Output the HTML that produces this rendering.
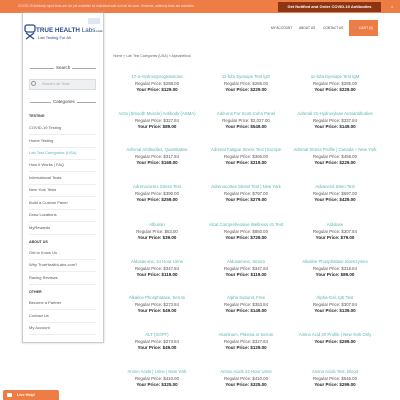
<!DOCTYPE html>
<html><head><meta charset="utf-8"><style>
*{margin:0;padding:0;box-sizing:border-box}
body{width:400px;height:400px;overflow:hidden;background:#fff;font-family:"Liberation Sans",sans-serif;position:relative;color:#555}
.a{position:absolute;white-space:nowrap}
.top{position:absolute;left:0;top:0;width:400px;height:13px;background:#ee7d45}
.side{position:absolute;left:22px;top:13px;width:82px;height:330px;border:1px solid #ccc;border-top:none;box-shadow:0 0 2px #ccc}
.si{position:absolute;left:29px;width:67px;font-size:4px;color:#555;border-bottom:1px solid #eee;height:12px;line-height:9px}
.h{position:absolute;left:29px;font-size:3.6px;font-weight:bold;color:#333}
.it{position:absolute;width:110px;text-align:center;font-size:4.3px;line-height:6.6px}
.it .t{color:#5ab4b4}
.it .r{color:#555}
.it .y{color:#222;font-weight:bold;font-size:4.5px}
</style></head><body>
<div class="top"></div>
<div class="a" style="left:18px;top:4px;font-size:3.2px;color:#fde">COVID-19 Antibody rapid tests are not yet available for individual sale but will be soon. However, antibody tests are available.</div>
<div class="a" style="left:278px;top:2px;width:103px;height:10px;background:#8e3412;color:#fff;font-size:4px;font-weight:bold;text-align:center;line-height:10px">Get Notified and Order COVID-19 Antibodies</div>
<div class="a" style="left:391px;top:4px;font-size:4px;color:#fff">×</div>
<div class="side"></div>
<svg class="a" style="left:24px;top:24px" width="12" height="16" viewBox="0 0 12 16"><rect x="1" y="1" width="10" height="7" rx="2" fill="none" stroke="#2a4a8a" stroke-width="1.3"/><path d="M2 9 L10 15 M10 9 L2 15" stroke="#2a4a8a" stroke-width="1.3"/></svg>
<div class="a" style="left:36px;top:27px;font-size:6.3px;font-weight:bold;color:#2a4a8a">TRUE HEALTH <span style="font-weight:normal">Labs</span><span style="font-size:3px">.com</span></div>
<div class="a" style="left:38px;top:35px;font-size:4px;color:#2a4a8a">Lab Testing For All</div>
<div class="a" style="left:88px;top:18px;width:12px;height:6px;background:#dde6f3"></div>
<div class="a" style="left:271px;top:26px;font-size:3.2px;color:#444">MY ACCOUNT</div>
<div class="a" style="left:299px;top:26px;font-size:3.2px;color:#444">ABOUT US</div>
<div class="a" style="left:323px;top:26px;font-size:3.2px;color:#444">CONTACT US</div>
<div class="a" style="left:349px;top:20px;width:29px;height:16px;background:#ee7d45;color:#fff;font-size:3.4px;line-height:16px;text-align:center">🛒 CART (0)</div>
<div class="a" style="left:113px;top:54px;font-size:3.5px;color:#666">Home » Lab Test Categories (USA) » Alphabetical</div>
<div class="a" style="left:30px;top:68px;width:66px;border-top:1px solid #aaa"></div>
<div class="a" style="left:54px;top:65px;background:#fff;font-size:4.5px;padding:0 2px;color:#444">Search</div>
<div class="a" style="left:29px;top:79px;width:67px;height:11px;background:#eef0f2;border:1px solid #ddd;font-size:3.6px;color:#aaa;line-height:9px;padding-left:12px">Search Lab Tests</div>
<div class="a" style="left:31px;top:81px;width:5px;height:5px;border:1px solid #999;border-radius:50%"></div>
<div class="a" style="left:30px;top:102px;width:66px;border-top:1px solid #aaa"></div>
<div class="a" style="left:51px;top:99px;background:#fff;font-size:4.5px;padding:0 2px;color:#444">Categories</div>
<div class="h" style="top:114px">TESTING</div>
<div class="si" style="top:123px">COVID-19 Testing</div>
<div class="si" style="top:136px">Home Testing</div>
<div class="si" style="top:148px;color:#5ab4b4">Lab Test Categories (USA)</div>
<div class="si" style="top:160px">How It Works | FAQ</div>
<div class="si" style="top:173px">International Tests</div>
<div class="si" style="top:185px">New York Tests</div>
<div class="si" style="top:198px">Build a Custom Panel</div>
<div class="si" style="top:210px">Draw Locations</div>
<div class="si" style="top:223px">MyRewards</div>
<div class="h" style="top:240px">ABOUT US</div>
<div class="si" style="top:248px">Get to Know Us</div>
<div class="si" style="top:260px">Why TrueHealthLabs.com?</div>
<div class="si" style="top:273px">Raving Reviews</div>
<div class="h" style="top:290px">OTHER</div>
<div class="si" style="top:298px">Become a Partner</div>
<div class="si" style="top:311px">Contact Us</div>
<div class="si" style="top:323px">My Account</div>
<div class="a" style="left:3px;top:390px;width:56px;height:10px;background:#ee7d45;border-radius:2px 2px 0 0;color:#fff;font-size:3.8px;font-weight:bold;line-height:10px;padding-left:14px">Live Help!</div>
<div class="a" style="left:7px;top:393px;width:5px;height:4px;background:#fff;border-radius:1px"></div>

<div class="it" style="left:102px;top:74px"><div class="t">17-α-Hydroxyprogesterone</div><div class="r">Regular Price: $288.00</div><div class="y">Your Price: $129.00</div></div>
<div class="it" style="left:191px;top:74px"><div class="t">11-bZa Eyesope Test IgG</div><div class="r">Regular Price: $285.00</div><div class="y">Your Price: $229.00</div></div>
<div class="it" style="left:280px;top:74px"><div class="t">11-bZa Eyesope Test IgM</div><div class="r">Regular Price: $285.00</div><div class="y">Your Price: $229.00</div></div>

<div class="it" style="left:102px;top:111px"><div class="t">Actin (Smooth Muscle) Antibody (ASMA)</div><div class="r">Regular Price: $327.84</div><div class="y">Your Price: $89.00</div></div>
<div class="it" style="left:191px;top:111px"><div class="t">Add-ons For Scott Cohn Panel</div><div class="r">Regular Price: $2,027.00</div><div class="y">Your Price: $549.00</div></div>
<div class="it" style="left:280px;top:111px"><div class="t">Adrenal 21-Hydroxylase Autoantibodies</div><div class="r">Regular Price: $337.84</div><div class="y">Your Price: $149.00</div></div>

<div class="it" style="left:102px;top:147px"><div class="t">Adrenal Antibodies, Quantitative</div><div class="r">Regular Price: $317.84</div><div class="y">Your Price: $169.00</div></div>
<div class="it" style="left:191px;top:147px"><div class="t">Adrenal Fatigue Stress Test | Europe</div><div class="r">Regular Price: $366.00</div><div class="y">Your Price: $219.00</div></div>
<div class="it" style="left:280px;top:147px"><div class="t">Adrenal Stress Profile | Canada + New York</div><div class="r">Regular Price: $458.00</div><div class="y">Your Price: $229.00</div></div>

<div class="it" style="left:102px;top:184px"><div class="t">Adrenocortex Stress Test</div><div class="r">Regular Price: $390.00</div><div class="y">Your Price: $259.00</div></div>
<div class="it" style="left:191px;top:184px"><div class="t">Adrenocortex Stress Test | New York</div><div class="r">Regular Price: $797.00</div><div class="y">Your Price: $279.00</div></div>
<div class="it" style="left:280px;top:184px"><div class="t">Advanced Stem Test</div><div class="r">Regular Price: $697.00</div><div class="y">Your Price: $429.00</div></div>

<div class="it" style="left:102px;top:222px"><div class="t">Albumin</div><div class="r">Regular Price: $63.00</div><div class="y">Your Price: $39.00</div></div>
<div class="it" style="left:191px;top:222px"><div class="t">Alcat Comprehensive Wellness 41 Test</div><div class="r">Regular Price: $850.00</div><div class="y">Your Price: $729.00</div></div>
<div class="it" style="left:280px;top:222px"><div class="t">Aldolase</div><div class="r">Regular Price: $307.84</div><div class="y">Your Price: $79.00</div></div>

<div class="it" style="left:102px;top:259px"><div class="t">Aldosterone, 24 Hour Urine</div><div class="r">Regular Price: $347.84</div><div class="y">Your Price: $119.00</div></div>
<div class="it" style="left:191px;top:259px"><div class="t">Aldosterone, Serum</div><div class="r">Regular Price: $347.84</div><div class="y">Your Price: $119.00</div></div>
<div class="it" style="left:280px;top:259px"><div class="t">Alkaline Phosphatase Isoenzymes</div><div class="r">Regular Price: $318.84</div><div class="y">Your Price: $89.00</div></div>

<div class="it" style="left:102px;top:295px"><div class="t">Alkaline Phosphatase, Serum</div><div class="r">Regular Price: $273.84</div><div class="y">Your Price: $49.00</div></div>
<div class="it" style="left:191px;top:295px"><div class="t">Alpha Subunit, Free</div><div class="r">Regular Price: $353.84</div><div class="y">Your Price: $149.00</div></div>
<div class="it" style="left:280px;top:295px"><div class="t">Alpha-Gal, IgE Test</div><div class="r">Regular Price: $307.84</div><div class="y">Your Price: $139.00</div></div>

<div class="it" style="left:102px;top:332px"><div class="t">ALT (SGPT)</div><div class="r">Regular Price: $273.84</div><div class="y">Your Price: $49.00</div></div>
<div class="it" style="left:191px;top:332px"><div class="t">Aluminum, Plasma or Serum</div><div class="r">Regular Price: $327.84</div><div class="y">Your Price: $129.00</div></div>
<div class="it" style="left:280px;top:332px"><div class="t">Amino Acid 20 Profile | New York Only</div><div class="y">Your Price: $299.00</div></div>

<div class="it" style="left:102px;top:369px"><div class="t">Amino Acids | Urine | New York</div><div class="r">Regular Price: $410.00</div><div class="y">Your Price: $325.00</div></div>
<div class="it" style="left:191px;top:369px"><div class="t">Amino Acids 24 Hour Urine</div><div class="r">Regular Price: $410.00</div><div class="y">Your Price: $325.00</div></div>
<div class="it" style="left:280px;top:369px"><div class="t">Amino Acids Test, Blood</div><div class="r">Regular Price: $546.00</div><div class="y">Your Price: $299.00</div></div>
</body></html>
